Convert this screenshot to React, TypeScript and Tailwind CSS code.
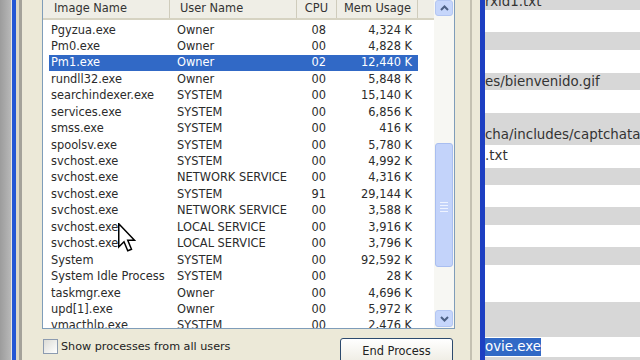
import React from 'react';

const procs: [string, string, string, string][] = [
  ['Pgyzua.exe', 'Owner', '08', '4,324 K'],
  ['Pm0.exe', 'Owner', '00', '4,828 K'],
  ['Pm1.exe', 'Owner', '02', '12,440 K'],
  ['rundll32.exe', 'Owner', '00', '5,848 K'],
  ['searchindexer.exe', 'SYSTEM', '00', '15,140 K'],
  ['services.exe', 'SYSTEM', '00', '6,856 K'],
  ['smss.exe', 'SYSTEM', '00', '416 K'],
  ['spoolsv.exe', 'SYSTEM', '00', '5,780 K'],
  ['svchost.exe', 'SYSTEM', '00', '4,992 K'],
  ['svchost.exe', 'NETWORK SERVICE', '00', '4,316 K'],
  ['svchost.exe', 'SYSTEM', '91', '29,144 K'],
  ['svchost.exe', 'NETWORK SERVICE', '00', '3,588 K'],
  ['svchost.exe', 'LOCAL SERVICE', '00', '3,916 K'],
  ['svchost.exe', 'LOCAL SERVICE', '00', '3,796 K'],
  ['System', 'SYSTEM', '00', '92,592 K'],
  ['System Idle Process', 'SYSTEM', '00', '28 K'],
  ['taskmgr.exe', 'Owner', '00', '4,696 K'],
  ['upd[1].exe', 'Owner', '00', '5,972 K'],
  ['vmacthlp.exe', 'SYSTEM', '00', '2,476 K'],
];

// stripes of the editor window on the right: [height, gray?, text]
const bands: [number, boolean, string][] = [
  [10, true, ''],
  [22, false, ''],
  [18, true, ''],
  [23, false, ''],
  [17, true, 'es/bienvenido.gif'],
  [23, false, ''],
  [32, true, ''],
  [23, false, '.txt'],
  [17, true, ''],
  [22, false, ''],
  [18, true, ''],
  [22, false, ''],
  [18, true, ''],
  [37, false, ''],
  [35, true, ''],
  [20, false, ''],
  [10, true, ''],
];

function Chevron({ up }: { up?: boolean }) {
  return (
    <svg width="9" height="6" viewBox="0 0 9 6">
      <path
        d={up ? 'M1 5 L4.5 1.5 L8 5' : 'M1 1 L4.5 4.5 L8 1'}
        fill="none"
        stroke="#4d6185"
        strokeWidth="2"
      />
    </svg>
  );
}

export default function App() {
  return (
    <div
      className="relative flex w-[640px] h-[360px] overflow-hidden bg-[#ece9d8] text-[#2b2b2b]"
      style={{ fontFamily: '"DejaVu Sans", Verdana, sans-serif' }}
    >
      {/* left window edge */}
      <div className="w-[11px] bg-gradient-to-r from-[#9c9c9c] to-[#b8b8b8]" />
      <div className="w-[1px] bg-[#e4e4e4]" />
      <div className="w-[4px] bg-[#2356d4]" />
      <div className="w-[3px] bg-[#dcd8c8]" />
      <div className="w-[3px] bg-[#a4a29a]" />

      {/* task manager panel */}
      <div className="flex flex-col w-[448px] pl-[20px] pr-[15px] bg-[#ece9d8]">
        <div className="flex shrink-0 h-[329px] w-[413px] border-x border-b border-[#7f9db9] bg-white overflow-hidden">
          <div className="w-[391px] flex flex-col text-[11.4px]">
            {/* header */}
            <div className="flex h-[20px] bg-[#efeee6] border-b-2 border-[#d6d3c2] text-[#333] shrink-0">
              <div className="w-[127px] pl-[11px] flex items-center border-r border-[#cfccbc]">Image Name</div>
              <div className="w-[127px] pl-[10px] flex items-center border-r border-[#cfccbc]">User Name</div>
              <div className="w-[40px] pr-[8px] flex items-center justify-end border-r border-[#cfccbc]">CPU</div>
              <div className="w-[81px] pr-[6px] flex items-center justify-end border-r border-[#cfccbc]">Mem Usage</div>
              <div className="flex-1" />
            </div>
            <div className="pt-[2px] pl-[6px]">
              {procs.map(([name, user, cpu, mem], i) => {
                const sel = i === 2;
                return (
                  <div
                    key={i}
                    className={
                      'flex w-[369px] h-[16.45px] items-center leading-none ' +
                      (sel ? 'bg-[#3169c6] text-white' : '')
                    }
                  >
                    <div className="w-[121px] pl-[2px] whitespace-nowrap">{name}</div>
                    <div className="w-[127px] pl-[7px] whitespace-nowrap">{user}</div>
                    <div className="w-[40px] pr-[11px] text-right">{cpu}</div>
                    <div className="w-[81px] pr-[6px] text-right whitespace-nowrap">{mem}</div>
                  </div>
                );
              })}
            </div>
          </div>

          {/* scrollbar */}
          <div className="w-[20px] flex flex-col bg-[#f7f7f3] px-[1px]">
            <div className="h-[16px] rounded-[3px] bg-[#c6d6fb] border border-[#b3c6f2] flex items-center justify-center">
              <Chevron up />
            </div>
            <div className="h-[127px]" />
            <div className="h-[124px] rounded-[3px] bg-[#c3d3fa] border border-[#a9bef0] flex items-center justify-center">
              <div className="flex flex-col gap-[2px] w-[8px] pt-[4px]">
                <div className="h-[1px] bg-[#eef3ff]" />
                <div className="h-[1px] bg-[#eef3ff]" />
                <div className="h-[1px] bg-[#eef3ff]" />
                <div className="h-[1px] bg-[#eef3ff]" />
              </div>
            </div>
            <div className="flex-1" />
            <div className="h-[17px] mb-[1px] rounded-[3px] bg-[#c6d6fb] border border-[#b3c6f2] flex items-center justify-center">
              <Chevron />
            </div>
          </div>
        </div>

        {/* bottom controls */}
        <div className="flex shrink-0 items-start pt-[9px] text-[11.2px]">
          <div className="ml-[1px] mt-[1px] w-[15px] h-[15px] border border-[#8c9bb0] bg-gradient-to-br from-[#dcdcd6] to-white" />
          <div className="ml-[3px] mt-[1px] leading-[15px] text-[#222]">Show processes from all users</div>
          <div className="ml-auto mr-[2px] w-[113px] h-[28px] rounded-[3px] border border-[#2c4a6e] bg-gradient-to-b from-white to-[#eceae0] flex items-center justify-center text-[11.4px] text-[#222]">
            End Process
          </div>
        </div>
      </div>

      {/* frame between windows */}
      <div className="w-[2px] bg-[#c4c1b2]" />
      <div className="w-[8px] bg-[#ece9d8]" />
      <div className="w-[5px] bg-[#1d3fc2]" />

      {/* editor window on the right */}
      <div className="flex-1 flex flex-col text-[13.4px] text-[#333] overflow-hidden">
        {bands.map(([h, gray, text], i) => (
          <div
            key={i}
            className={'shrink-0 flex items-center whitespace-nowrap ' + (gray ? 'bg-[#d7d7d7]' : 'bg-white')}
            style={{ height: h }}
          >
            {i === 0 && <span className="-mt-[6px]">rxid1.txt</span>}
            {i === 6 && <span className="mt-[13px]">cha/includes/captchata</span>}
            {i === 15 && <span className="bg-[#3169c6] text-white leading-[18px]">ovie.exe</span>}
            {text && <span className={i === 7 ? '-mt-[1px]' : 'mt-[1px]'}>{text}</span>}
          </div>
        ))}
      </div>

      {/* mouse pointer */}
      <svg className="absolute left-[118px] top-[223px]" width="18" height="30" viewBox="0 0 12 20">
        <path
          d="M0.5 0.5 L0.5 16 L4 12.5 L6.5 18.5 L9 17.5 L6.5 11.5 L11 11.5 Z"
          fill="white"
          stroke="black"
          strokeWidth="1"
          strokeLinejoin="miter"
        />
      </svg>
    </div>
  );
}
